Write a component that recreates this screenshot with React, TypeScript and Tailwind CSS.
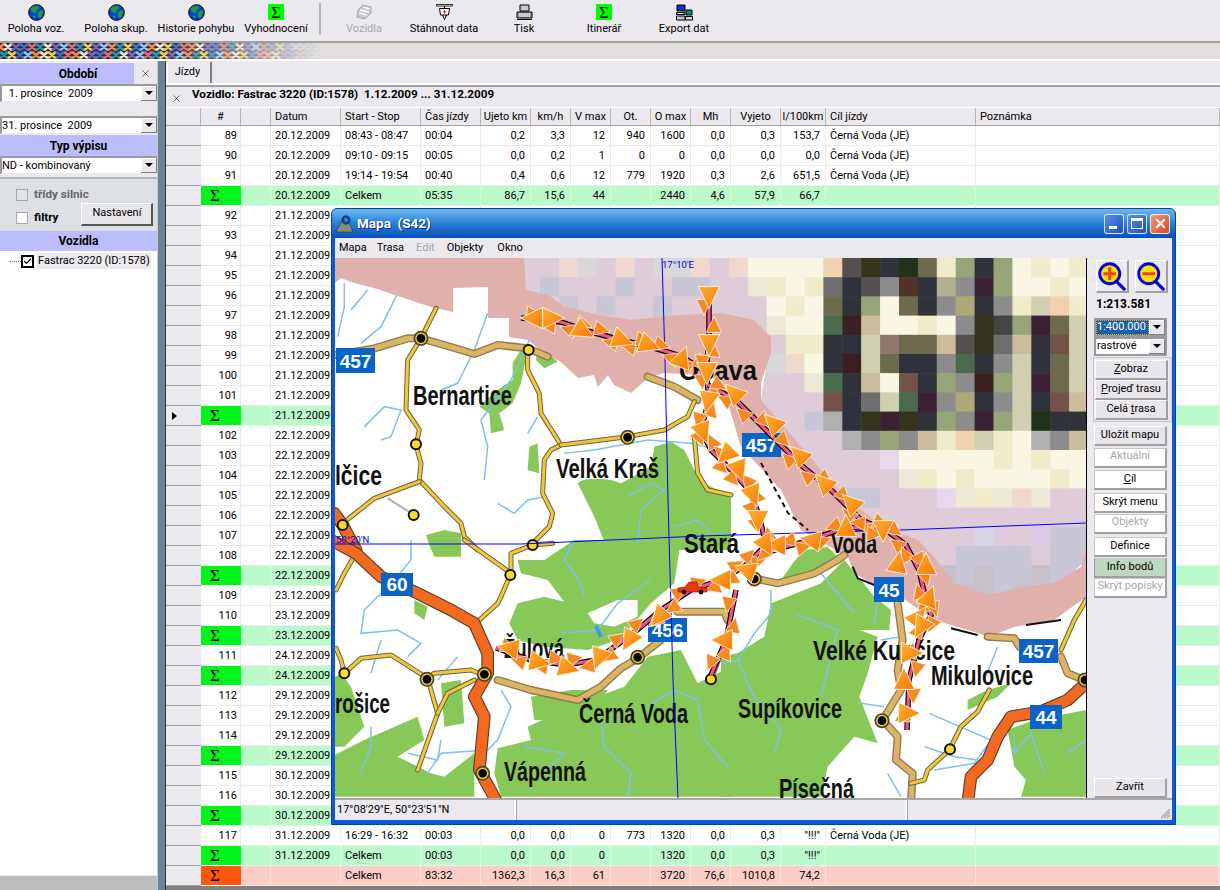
import { Check, X } from "lucide-react";

const gridCols =
  "grid grid-cols-[35px_40px_30px_70px_80px_60px_50px_40px_40px_40px_40px_40px_50px_45px_150px_1fr]";

const headers = ["", "#", "", "Datum", "Start - Stop", "Čas jízdy", "Ujeto km", "km/h", "V max", "Ot.", "O max", "Mh", "Vyjeto", "l/100km", "Cíl jízdy", "Poznámka"];
const leftCols = [3, 4, 5, 14, 15];

type Row = { kind: "row" | "sum" | "total"; no?: string; date: string; cells?: string[]; marker?: boolean };

function trip(no: number, date: string, cells?: string[]): Row {
  return { kind: "row", no: String(no), date, cells };
}
function sum(date: string, cells?: string[], marker?: boolean): Row {
  return { kind: "sum", date, cells, marker };
}

const rows: Row[] = [
  trip(89, "20.12.2009", ["08:43 - 08:47", "00:04", "0,2", "3,3", "12", "940", "1600", "0,0", "0,3", "153,7", "Černá Voda (JE)"]),
  trip(90, "20.12.2009", ["09:10 - 09:15", "00:05", "0,0", "0,2", "1", "0", "0", "0,0", "0,0", "0,0", "Černá Voda (JE)"]),
  trip(91, "20.12.2009", ["19:14 - 19:54", "00:40", "0,4", "0,6", "12", "779", "1920", "0,3", "2,6", "651,5", "Černá Voda (JE)"]),
  sum("20.12.2009", ["Celkem", "05:35", "86,7", "15,6", "44", "", "2440", "4,6", "57,9", "66,7", ""]),
  ...[92, 93, 94, 95, 96, 97, 98, 99, 100, 101].map((n) => trip(n, "21.12.2009")),
  sum("21.12.2009", undefined, true),
  ...[102, 103, 104, 105, 106, 107, 108].map((n) => trip(n, "22.12.2009")),
  sum("22.12.2009"),
  trip(109, "23.12.2009"),
  trip(110, "23.12.2009"),
  sum("23.12.2009"),
  trip(111, "24.12.2009"),
  sum("24.12.2009"),
  trip(112, "29.12.2009"),
  trip(113, "29.12.2009"),
  trip(114, "29.12.2009"),
  sum("29.12.2009"),
  trip(115, "30.12.2009"),
  trip(116, "30.12.2009"),
  sum("30.12.2009"),
  trip(117, "31.12.2009", ["16:29 - 16:32", "00:03", "0,0", "0,0", "0", "773", "1320", "0,0", "0,3", '"!!!"', "Černá Voda (JE)"]),
  sum("31.12.2009", ["Celkem", "00:03", "0,0", "0,0", "0", "", "1320", "0,0", "0,3", '"!!!"', ""]),
  { kind: "total", date: "", cells: ["Celkem", "83:32", "1362,3", "16,3", "61", "", "3720", "76,6", "1010,8", "74,2", ""] },
];

function Sigma({ className }: { className: string }) {
  return <span className={`font-['Liberation_Serif',serif] flex items-center text-[17px] leading-none text-black ${className}`}>Σ</span>;
}

function Globe() {
  return (
    <svg width="17" height="17" viewBox="0 0 17 17">
      <circle cx="8.5" cy="8.5" r="7.8" fill="#0b3fe6" stroke="#000" />
      <path d="M3 3 L9 1.5 L11.5 4 L8 7 L9 9.5 L6 9 L2.5 6 Z M10 8 L14.5 5.5 L15.5 9 L12 14.5 L10 12 Z M5 11 L7 12 L7 15 L5 13 Z" fill="#1f9a35" />
    </svg>
  );
}

function ToolIcon({ name }: { name: string }) {
  if (name === "globe") return <Globe />;
  if (name === "sigma") return <Sigma className="w-4 h-4 justify-center bg-[#00ff00]" />;
  if (name === "car")
    return (
      <svg width="18" height="17" viewBox="0 0 18 17">
        <path d="M3 6 L8 1 L16 3 L16 9 L10 15 L2 13 Z" fill="#c8c8c8" stroke="#a8a8a8" />
        <path d="M5 6 L14 8 M4 9 L12 11 M8 3 L15 5" stroke="#fff" strokeWidth="1.5" />
      </svg>
    );
  if (name === "down")
    return (
      <svg width="17" height="17" viewBox="0 0 17 17">
        <path d="M0.5 0.5 H16.5 V2 H0.5 Z" fill="#fff" stroke="#000" strokeWidth="0.8" />
        <path d="M8.5 2 V4 M3.5 4.5 H13.5 L12.5 11 H4.5 Z M6.5 11 L8.5 15.5 L10.5 11" fill="#fff" stroke="#000" />
        <path d="M8.5 6 V9.5 M6.8 7.8 H10.2" stroke="#e02020" />
      </svg>
    );
  if (name === "print")
    return (
      <svg width="17" height="17" viewBox="0 0 17 17">
        <path d="M4 1 H13 V7 H4 Z" fill="#c8c8d0" stroke="#000" />
        <path d="M1 8 H16 V14 H1 Z" fill="#9a9aa2" stroke="#000" />
        <path d="M3 10 H14 M3 12 H14" stroke="#fff" />
        <path d="M1 15.5 H16" stroke="#000" />
      </svg>
    );
  return (
    <svg width="17" height="17" viewBox="0 0 17 17">
      <path d="M1 1 H9 V7 H1 Z" fill="#1030d0" stroke="#000" />
      <path d="M0.5 8.5 H9 V10.5 H0.5 Z M0.5 12 H9 V16 H0.5 Z" fill="#c8c8c8" stroke="#000" />
      <path d="M10 6 H16 V11 H10 Z" fill="#0f8a8a" stroke="#000" />
      <path d="M9.5 12.5 H16.5 V16 H9.5 Z" fill="#d8d8d8" stroke="#000" />
    </svg>
  );
}

function ToolButton({ icon, label, disabled }: { icon: string; label: string; disabled?: boolean }) {
  return (
    <div className={`w-20 shrink-0 flex flex-col items-center pt-[3px] ${disabled ? "text-[#a8a8a8]" : "text-black"}`}>
      <div className="h-[18px] flex items-center justify-center">
        <ToolIcon name={icon} />
      </div>
      <span className="mt-[1px] whitespace-nowrap leading-[14px]">{label}</span>
    </div>
  );
}

const puzzle = ["#f08a3c", "#f3cf3f", "#8fc5e8", "#2f8f9a", "#7d63a8", "#e46a5a", "#f3e6b0", "#3f6fb0"];

function Banner() {
  const shapes = [];
  for (let i = 0; i < 42; i++) {
    for (let j = 0; j < 2; j++) {
      const c = puzzle[(i * 5 + j * 3 + (i % 3)) % puzzle.length];
      const x = i * 8 + (j ? 4 : 0);
      const y = 4 + j * 8;
      shapes.push(<path key={`${i}-${j}`} d={`M${x - 3} ${y - 2.5} L${x + 3} ${y + 2.5} M${x + 3} ${y - 2.5} L${x - 3} ${y + 2.5}`} stroke={c} strokeWidth="2.8" strokeLinecap="round" />);
    }
  }
  return (
    <svg width="1220" height="16" viewBox="0 0 1220 16" className="block">
      <defs>
        <linearGradient id="fade" x1="0" x2="1" y1="0" y2="0">
          <stop offset="0" stopColor="#e3dfdf" stopOpacity="0" />
          <stop offset="0.5" stopColor="#e3dfdf" stopOpacity="0.05" />
          <stop offset="0.92" stopColor="#e3dfdf" stopOpacity="1" />
        </linearGradient>
      </defs>
      <rect width="1220" height="16" fill="#e3dfdf" />
      <rect width="345" height="16" fill="#1c2560" />
      {shapes}
      <rect width="350" height="16" fill="url(#fade)" />
    </svg>
  );
}

function Combo({ value, className = "" }: { value: string; className?: string }) {
  return (
    <div className={`h-[18px] w-[157px] flex bg-white border-t-2 border-l-2 border-[#9a9a9a] border-b border-b-[#ebe9ed] ${className}`}>
      <span className="flex-1 leading-[15px] whitespace-pre overflow-hidden">{value}</span>
      <ArrowBtn />
    </div>
  );
}

function ArrowBtn() {
  return (
    <span className="w-4 h-[15px] shrink-0 flex items-center justify-center bg-[#ebe9ed] border-r border-b border-[#808080] shadow-[inset_1px_1px_0_#fff]">
      <span className="border-x-[4px] border-x-transparent border-t-[4px] border-t-black" />
    </span>
  );
}

function Header({ title, className = "" }: { title: string; className?: string }) {
  return <div className={`flex items-center justify-center bg-[#bdbdfb] font-bold text-[12px] ${className}`}>{title}</div>;
}

function LeftPanel() {
  return (
    <aside className="w-[158px] shrink-0 flex flex-col bg-[#ebe9ed] border-r border-[#c8c8c8] pt-[2px]">
      <div className="h-[21px] flex">
        <div className="w-[134px] flex items-center justify-center pl-[22px] bg-[#bdbdfb] font-bold text-[12px]">Období</div>
        <div className="flex-1 flex items-center justify-center">
          <X size={11} strokeWidth={1.2} />
        </div>
      </div>
      <Combo value=" 1. prosince  2009" className="pl-[4px]" />
      <div className="h-[14px]" />
      <Combo value="31. prosince  2009" className="mb-[1px]" />
      <Header title="Typ výpisu" className="h-[21px]" />
      <Combo value="ND - kombinovaný" />
      <div className="h-[54px] mt-[3px] bg-[#dcdfe3] border-t-2 border-[#b8b8b8] flex flex-col">
        <div className="flex items-center h-[22px] mt-[5px] pl-[16px] gap-[6px] text-[#666] font-bold text-[11.7px]">
          <span className="w-3 h-3 bg-[#e3e3e3] border border-[#a8a8a8]" />
          třídy silnic
        </div>
        <div className="flex items-center h-[24px] pl-[16px] gap-[6px] font-bold text-[11.7px]">
          <span className="w-3 h-3 bg-white border border-[#a8a8a8]" />
          filtry
          <span className="ml-[17px] w-[72px] h-[23px] -translate-y-1 flex items-center justify-center font-normal text-[11px] bg-[#e8e6ea] border-t border-l border-white border-r-2 border-b-2 border-r-[#555] border-b-[#555]">Nastavení</span>
        </div>
      </div>
      <Header title="Vozidla" className="h-[20px]" />
      <div className="flex-1 bg-white pl-[9px] pt-[1px]">
        <div className="flex items-center h-[18px]">
          <span className="w-[12px] shrink-0 border-t border-dotted border-[#808080]" />
          <span className="w-[13px] h-[13px] shrink-0 border-2 border-black flex items-center justify-center">
            <Check size={11} strokeWidth={3.2} />
          </span>
          <span className="ml-[3px] px-[1px] bg-[#ebe9ed] whitespace-nowrap">Fastrac 3220 (ID:1578)</span>
        </div>
      </div>
      <div className="h-[15px] bg-[#bebebe] border-t border-[#eeeeee]" />
    </aside>
  );
}

function GridRow({ row }: { row: Row }) {
  const bg = row.kind === "row" ? "bg-white" : row.kind === "sum" ? "bg-[#bbfbcb]" : "bg-[#ffcdc8]";
  const line = row.kind === "row" ? "border-[#ebe9ed]" : row.kind === "sum" ? "border-[#d9fbe2]" : "border-[#fde3e0]";
  const cells = row.cells ?? [];
  return (
    <div className={`${gridCols} h-5 ${bg}`}>
      <div className="bg-[#ebe9ed] border-b border-[#a0a0a0] flex items-center pl-[6px]">
        {row.marker && <span className="border-y-[4px] border-y-transparent border-l-[5px] border-l-black" />}
      </div>
      {row.kind === "row" ? (
        <div className={`border-b border-r ${line} text-right pr-[3px] leading-[19px]`}>{row.no}</div>
      ) : (
        <Sigma className={`pl-[9px] border-b border-white ${row.kind === "sum" ? "bg-[#00f51c]" : "bg-[#ff560f]"}`} />
      )}
      <div className={`border-b border-r ${line}`} />
      <div className={`border-b border-r ${line} pl-[4px] leading-[19px] whitespace-nowrap overflow-hidden`}>{row.date}</div>
      {headers.slice(4).map((_, i) => {
        const left = leftCols.includes(i + 4);
        return (
          <div key={i} className={`border-b border-r ${line} leading-[19px] whitespace-nowrap overflow-hidden ${left ? "pl-[4px]" : "text-right pr-[5px]"}`}>
            {cells[i] ?? ""}
          </div>
        );
      })}
    </div>
  );
}

function DataGrid() {
  return (
    <div className="flex-1 flex flex-col min-w-0">
      <div className="h-[24px] bg-[#ebe9ed] flex items-end pl-[1px] border-b-2 border-white">
        <div className="w-[45px] h-[21px] flex items-center justify-center pr-[3px] border-l border-white border-r-2 border-r-[#808080]">Jízdy</div>
      </div>
      <div className="h-[22px] bg-[#ebe9ed] border-t-2 border-[#a0a0a0] flex items-center">
        <span className="w-[26px] pl-[5px] pt-[3px]">
          <X size={11} strokeWidth={1.2} />
        </span>
        <span className="font-bold text-[11.7px] whitespace-pre pb-[5px]">Vozidlo: Fastrac 3220 (ID:1578)  1.12.2009 ... 31.12.2009</span>
      </div>
      <div className={`${gridCols} h-[19px] bg-[#ebe9ed] border-t border-white border-b border-b-[#a0a0a0]`}>
        {headers.map((h, i) => (
          <div key={i} className={`leading-[17px] whitespace-nowrap overflow-hidden border-r border-[#b8b8b8] ${leftCols.includes(i) ? "pl-[4px]" : "text-center"}`}>
            {h}
          </div>
        ))}
      </div>
      <div className="flex-1 overflow-hidden bg-white">
        {rows.map((r, i) => (
          <GridRow key={i} row={r} />
        ))}
      </div>
      <div className="h-[4px] bg-[#808080]" />
    </div>
  );
}

const palette: Record<string, string> = {
  c: "#f9f7e4", e: "#f0ecca", o: "#f0d2b0", d: "#2f323a", k: "#54504f", m: "#34331c", g: "#223218", v: "#6e6a4c",
  s: "#96a578", n: "#8c8c8c", y: "#6e6e6e", b: "#4e3428", p: "#3a2234", r: "#3a2020", f: "#4c6a50", t: "#cbbd9b",
  l: "#d0d0b0", u: "#72524a", h: "#ada877", a: "#b0b0b0", i: "#deccd8", j: "#c9c6d6", w: "#ece9d8", q: "#eed8d0",
  z: "#e8d8ec", x: "#917670", A: "#b0b090", B: "#d8d8d8", C: "#444444", D: "#c6c0c8", E: "#d5d5e5", G: "#dcc8e8",
};

const mosaic = [
  "iiqBiqiBBqi" + "qccccokmdgvesdscece",
  "ijiiijiijji" + "iweceydknbdAnpsccec",
  "iijijiijiii" + "iicecvdscvdnhdneloe",
  "iiiiiiijjii" + "iiwccfrtccecnmCspvl",
  "iiiiiiiiiii" + "iiieeddlxvvtkmytdul",
  "iiiiiiiiiii" + "iiBqcdrlvddnfdnldvl",
  "iiiiiiiiiii" + "iiiiwfdtcudsnrslpvl",
  "iiiiiiiiiii" + "iiiiiudylfpnhdnldut",
  "iiiiiiiiiii" + "iiiijadmpmdsnpslgdd",
  "iiiiiiiiiii" + "iiiiiiansnteolecant",
  "iiiiiiiiiii" + "iiiiiiiizcccccececc",
  "iiiiiiiiiii" + "iiiiiiiiiwececcccec",
  "iiiiiiiiiii" + "iiiiijjjiiizwewqwii",
  "iiiiiiiiiii" + "iiiiiiiiiiiiiiiiiii",
  "iiiiiiiiiii" + "iiiiiiiiiiiiiEiiGjj",
  "iiiiiiiiiii" + "iiiiiiiijjiijjjjijj",
  "iiiiiiiiiii" + "iiiiiiijjiiDjDjjDjj",
  "iiiiiiiiiii" + "iiiiiiiiiDjjDDjDjjD",
];

const big: [number, number, number][] = [
  [532, 318, 180], [551, 318, 0], [582, 331, 30], [621, 340, 20], [648, 345, 20], [681, 358, -70],
  [708, 296, 90], [708, 344, 90], [706, 372, 90], [707, 401, 100], [702, 432, 70], [725, 455, 135],
  [733, 393, 225], [772, 423, 225], [798, 455, 225], [823, 483, 225], [850, 503, 225], [882, 530, 90],
  [810, 540, 190], [845, 527, -90], [775, 545, 180], [738, 470, 70], [752, 495, 70], [757, 520, 90], [765, 545, 60],
  [720, 580, 180], [745, 570, 200], [658, 617, 130], [628, 640, 120], [598, 658, 110], [567, 668, 15], [538, 662, 10], [508, 648, 190],
  [897, 563, -80], [925, 565, -90], [928, 597, -70], [917, 617, -50], [920, 627, 120], [910, 653, 0], [903, 680, -90], [907, 713, 0], [722, 640, 180],
];

const routes = [
  "520,318 560,322 590,332 620,340 650,347 680,356 705,372",
  "708,292 708,340 705,372 708,400 700,430 710,450 730,470 748,490 758,515 765,545",
  "707,385 735,400 770,435 800,465 830,490 860,520 885,530 905,545 918,570 925,600 930,615 918,640 908,680 906,730",
  "745,560 780,548 810,540 845,527 885,530",
  "765,545 745,565 720,580 690,590 660,610 630,635 595,660 565,665 530,660 495,648",
  "735,590 725,640 710,675",
];

function tri(x: number, y: number, angle: number, s: number) {
  const a = (angle * Math.PI) / 180;
  const pt = (dx: number, dy: number) => `${(x + dx * Math.cos(a) - dy * Math.sin(a)).toFixed(1)},${(y + dx * Math.sin(a) + dy * Math.cos(a)).toFixed(1)}`;
  return `${pt(s, 0)} ${pt(-s * 0.75, s * 0.85)} ${pt(-s * 0.75, -s * 0.85)}`;
}

function smallArrows() {
  const out: [number, number, number][] = [];
  routes.forEach((r, ri) => {
    const pts = r.split(" ").map((p) => p.split(",").map(Number));
    for (let i = 0; i < pts.length - 1; i++) {
      const [x1, y1] = pts[i];
      const [x2, y2] = pts[i + 1];
      const len = Math.hypot(x2 - x1, y2 - y1);
      const ang = (Math.atan2(y2 - y1, x2 - x1) * 180) / Math.PI;
      [0.3, 0.7].forEach((f, k) => {
        const side = (i + ri + k) % 2 ? 5 : -5;
        out.push([x1 + (x2 - x1) * f - ((y2 - y1) / len) * side, y1 + (y2 - y1) * f + ((x2 - x1) / len) * side, ang + ((i + k) % 2 ? 180 : 0)]);
      });
    }
  });
  return out;
}

const ROAD_Y = "#efc93a";
const ROAD_T = "#dcb464";

function Road({ d, kind }: { d: string; kind: "y" | "t" | "o" }) {
  const o = kind === "y" ? 15 : kind === "t" ? 24 : 38;
  const i = kind === "y" ? 9 : kind === "t" ? 16 : 31;
  const c = kind === "y" ? ROAD_Y : kind === "t" ? ROAD_T : "#f26a20";
  const e = kind === "y" ? "#6b6248" : kind === "t" ? "#8d7a52" : "#5f3f2a";
  return (
    <>
      <path d={d} fill="none" stroke={e} strokeWidth={o} strokeLinejoin="round" strokeLinecap="round" />
      <path d={d} fill="none" stroke={c} strokeWidth={i} strokeLinejoin="round" strokeLinecap="round" />
    </>
  );
}

function Dot({ x, y, black }: { x: number; y: number; black?: boolean }) {
  return black ? (
    <>
      <circle cx={x} cy={y} r="20" fill="#f3cc2e" stroke="#4a4530" strokeWidth="5" />
      <circle cx={x} cy={y} r="13" fill="#000" />
    </>
  ) : (
    <circle cx={x} cy={y} r="15" fill="#ffd92a" stroke="#111" strokeWidth="6" />
  );
}

function Label({ x, y, w, t }: { x: number; y: number; w: number; t: string }) {
  return (
    <text x={x} y={y} fontFamily="'Liberation Sans', sans-serif" fontWeight="700" fontSize="27" textLength={w} lengthAdjust="spacingAndGlyphs" fill="#111">
      {t}
    </text>
  );
}

function Badge({ x, y, w, h, t }: { x: number; y: number; w: number; h: number; t: string }) {
  return (
    <>
      <rect x={x} y={y} width={w} height={h} fill="#0a64c8" />
      <text x={x + w / 2} y={y + h - 5} textAnchor="middle" fontFamily="'Liberation Sans', sans-serif" fontWeight="700" fontSize="19" fill="#fff">
        {t}
      </text>
    </>
  );
}

const green = "#88c858";
const blue = "#80c0ea";

function MapView() {
  return (
    <svg width="751" height="540" viewBox="334 258 751 540" className="block shrink-0 bg-white">
      <defs>
        <clipPath id="mosaicClip">
          <polygon points="523,258 1085,258 1085,560 1053,590 987,600 953,590 917,545 883,530 800,480 760,400 770,340 720,320 600,320 523,290" />
        </clipPath>
        <linearGradient id="arrow" x1="0" x2="1" y1="0" y2="1">
          <stop offset="0" stopColor="#ffb030" />
          <stop offset="1" stopColor="#f57a08" />
        </linearGradient>
      </defs>

      {/* forest */}
      <g transform="translate(330,250) scale(0.3333)" fill={green}>
        <path d="M740 700 Q760 680 840 690 L870 700 L960 650 L970 590 L1020 575 L1060 600 L1090 660 L1120 700 L1200 740 L1200 900 L830 900 L790 800 Z" />
        <path d="M445 470 L500 420 L545 390 L545 340 L575 290 L590 300 L570 400 L545 460 L505 490 L520 540 L480 550 L475 490 Z" />
        <path d="M595 590 L620 580 L625 670 L590 660 Z" />
        <path d="M285 855 L340 840 L390 850 L390 900 L300 900 Z" />
        <path d="M620 290 L650 310 L680 335 L640 355 L615 330 Z" />
      </g>
      <g transform="translate(330,540) scale(0.3333)" fill={green}>
        <path d="M730 0 L1050 0 L1030 130 L960 190 L900 260 L860 300 L770 330 L640 320 L560 300 L535 250 L560 190 L640 170 L700 185 L650 120 L570 100 L560 60 L640 60 Z" />
        <path d="M770 220 L860 180 L920 180 L920 230 L850 260 L790 250 Z" fill="#fff" />
        <path d="M500 625 L600 600 L590 560 L720 500 L880 440 L950 350 L1050 330 L1100 430 L1200 380 L1200 770 L510 770 L490 700 Z" />
        <path d="M600 470 L720 450 L830 450 L800 500 L720 540 L610 540 Z" />
        <path d="M0 420 L30 400 L60 440 L100 560 L40 620 L0 620 Z" />
        <path d="M250 180 L290 200 L280 240 L250 220 Z" />
        <path d="M330 430 L390 420 L400 550 L340 560 Z" />
        <path d="M0 770 L0 650 L100 600 L260 530 L280 600 L200 650 L300 700 L340 710 L430 640 L430 770 Z" />
        <path d="M290 0 L390 0 L390 50 L310 50 Z" />
      </g>
      <g transform="translate(720,540) scale(0.3333)" fill={green}>
        <path d="M150 190 L300 130 L370 60 L420 120 L460 170 L510 210 L505 270 L415 270 L470 290 L440 400 L415 470 L470 610 L400 590 L320 680 L300 770 L0 770 L0 350 L50 340 L130 290 Z" />
        <path d="M215 70 L250 30 L320 20 L350 50 L300 100 L180 120 Z" />
        <path d="M860 570 L940 540 L1095 510 L1095 770 L900 770 L915 720 L880 680 Z" />
        <path d="M740 480 L800 450 L870 430 L830 470 L740 510 Z" />
      </g>

      {/* rivers */}
      <g transform="translate(330,250) scale(0.3333)" fill="none" stroke={blue} strokeWidth="4.5">
        <path d="M40 100 L40 170 L20 260 M200 130 L150 230 L90 280 M110 120 L60 180" />
        <path d="M470 190 L430 300 L380 400 L330 420 M600 260 L540 390 L450 510 L470 590 L460 690" />
        <path d="M100 530 L160 470 L210 480 L180 560 L150 570 M620 500 L590 550 M500 760 L550 790 L590 750 L640 740" />
        <path d="M1200 610 L1080 580 L950 570 L790 600 L700 610 M890 740 L960 700 L1000 720 L930 780 L920 880 M1030 830 L1100 810 L1140 850" />
      </g>
      <g transform="translate(330,540) scale(0.3333)" fill="none" stroke={blue} strokeWidth="4.5">
        <path d="M240 0 L240 60 L190 120 L100 210 L90 280 L200 270 L270 310 L230 350 M150 300 L120 400 M380 350 L320 420" />
        <path d="M730 0 L700 60 L750 130 L760 170 M960 120 L860 190 L800 270 L690 280 M510 450 L540 500 L500 600 L470 630 L330 640 L290 700" />
        <path d="M120 560 L120 620 L90 700 M330 600 L320 660 L230 640 M580 620 L700 640 L640 700 M810 540 L820 620 L900 700 L890 770 M950 500 L1030 450 L1100 480 L1120 600 L1190 680" />
      </g>
      <g transform="translate(720,540) scale(0.3333)" fill="none" stroke={blue} strokeWidth="4.5">
        <path d="M150 150 L150 220 L100 280 L50 360 L100 470 L180 570 L160 640 M300 100 L400 220 M220 220 L350 270 L300 470 M60 360 L0 370" />
        <path d="M420 490 L490 500 M625 520 L810 600 L760 670 L640 690 M610 620 L700 650 L770 660 M830 320 L790 420 M1040 640 L1095 600 M880 580 L880 640 L930 580 L970 700 M500 700 L540 770" />
        <path d="M470 180 L460 250 M480 300 L540 290" />
      </g>
      <path d="M595 626 L600 637" stroke="#3aa0ee" strokeWidth="4" />

      {/* mosaic */}
      <g clipPath="url(#mosaicClip)">
        <rect x="520" y="258" width="570" height="350" fill="#deccd8" />
        {mosaic.map((line, r) =>
          line.split("").map((ch, c) => <rect key={`${r}-${c}`} x={520 + c * 18.9} y={258 + r * 19.2} width="19.4" height="19.7" fill={palette[ch]} />),
        )}
      </g>

      {/* border strip */}
      <polygon
        fill="#e0b0ac"
        points="334,258 523,258 525,290 547,295 563,306 597,315 630,320 680,315 720,313 753,320 770,337 770,353 760,383 760,400 797,443 843,497 883,527 917,540 933,557 953,583 987,595 1020,587 1053,583 1080,567 1085,550 1085,597 1053,620 1013,627 987,637 977,633 933,620 900,597 870,583 853,573 847,557 800,530 780,490 740,447 720,380 700,375 663,373 647,378 630,393 613,385 607,375 597,387 593,375 577,378 560,362 543,353 527,340 508,337 508,318 487,318 487,287 452,288 452,312 430,307 373,288 353,283 340,278 334,283"
      />

      {/* roads */}
      <g transform="translate(330,250) scale(0.3333)">
        <Road kind="t" d="M15 315 L130 295 L230 265 L270 265 L340 285 L430 312 L500 285 L590 295 L650 320" />
        <Road kind="t" d="M950 380 L1030 410 L1100 450" />
        <Road kind="y" d="M315 175 L270 265 L230 330 L225 480 L265 540 L255 585 L270 640 L265 690 L340 770 L390 820 L400 860 L440 900" />
        <Road kind="y" d="M590 300 L590 360 L625 430 L630 490 L690 585 L660 600 L640 630 L635 730 L665 790 L655 830 L605 880" />
        <Road kind="y" d="M690 585 L890 560 L1000 540 L1070 500 L1090 455" />
        <Road kind="y" d="M265 695 L130 745 L35 820" />
        <Road kind="y" d="M1090 560 L1100 670 L1130 720 L1200 735" />
        <path d="M170 745 L250 795" stroke="#b0b0b0" strokeWidth="6" />
        <Road kind="o" d="M10 790 L35 825 L75 900" />
      </g>
      <g transform="translate(330,540) scale(0.3333)">
        <Road kind="y" d="M400 0 L540 100 L510 170 L500 190 L440 245" />
        <Road kind="y" d="M540 100 L540 40 L605 15 L665 10" />
        <Road kind="y" d="M75 40 L40 100 L15 150" />
        <Road kind="y" d="M15 325 L30 360 L40 400 L90 355 L180 345 L290 415 L310 400 L420 390 L460 405" />
        <Road kind="y" d="M290 415 L320 520 L260 690" />
        <Road kind="y" d="M320 520 L350 460 L430 420" />
        <Road kind="y" d="M1140 420 L1170 340 L1190 300" />
        <Road kind="t" d="M500 420 L600 450 L740 480 L810 440 L870 385 L920 355 L990 300" />
        <Road kind="t" d="M1040 215 L1180 215 L1190 240" />
        <Road kind="o" d="M0 0 L75 40 L150 110 L260 160 L360 210 L430 250 L470 340 L470 400 L430 470 L460 530 L445 690 L500 790" />
      </g>
      <g transform="translate(720,540) scale(0.3333)">
        <Road kind="t" d="M100 115 L170 130 L280 100 L350 60 L370 45" />
        <Road kind="t" d="M530 190 L545 300 L530 390 L540 450 L485 540 L530 590 L525 660 L575 700 L570 790" />
        <Road kind="t" d="M800 290 L880 295 L895 320" />
        <Road kind="t" d="M1020 350 L1040 400 L1090 420" />
        <Road kind="y" d="M1020 330 L1060 240 L1095 180" />
        <Road kind="y" d="M805 450 L770 515 L720 560 L685 630 L620 690 L610 720 L570 730" />
        <Road kind="o" d="M1095 430 L1040 480 L960 515 L870 530 L830 590 L800 660 L750 710 L740 790" />
        <path d="M395 80 L410 115 L460 135 M690 265 L770 285 M915 255 L1020 240" fill="none" stroke="#111" strokeWidth="6" />
      </g>
      <path d="M760 463 L787 513 L807 530" fill="none" stroke="#111" strokeWidth="2" strokeDasharray="5 4" />

      {/* towns */}
      <g transform="translate(330,250) scale(0.3333)">
        <Dot x={270} y={265} black />
        <Dot x={890} y={562} black />
        <Dot x={593} y={300} />
        <Dot x={255} y={583} />
        <Dot x={248} y={795} />
        <Dot x={35} y={825} />
        <Dot x={605} y={885} />
      </g>
      <g transform="translate(330,540) scale(0.3333)">
        <Dot x={538} y={105} />
        <Dot x={40} y={400} />
        <Dot x={1140} y={418} />
        <Dot x={288} y={418} black />
        <Dot x={460} y={403} black />
        <Dot x={920} y={352} black />
        <Dot x={455} y={700} black />
      </g>
      <g transform="translate(720,540) scale(0.3333)">
        <Dot x={100} y={117} black />
        <Dot x={483} y={542} black />
        <Dot x={687} y={628} />
        <Dot x={1092} y={420} black />
      </g>

      {/* names */}
      <Label x={412} y={405} w={99} t="Bernartice" />
      <Label x={555} y={478} w={103} t="Velká Kraš" />
      <Label x={334} y={485} w={47} t="lčice" />
      <Label x={683} y={553} w={55} t="Stará" />
      <Label x={830} y={553} w={46} t="Voda" />
      <Label x={678} y={380} w={78} t="Opava" />
      <Label x={812} y={660} w={142} t="Velké Kunčice" />
      <Label x={930} y={685} w={102} t="Mikulovice" />
      <Label x={737} y={718} w={104} t="Supíkovice" />
      <Label x={778} y={798} w={75} t="Písečná" />
      <Label x={578} y={723} w={109} t="Černá Voda" />
      <Label x={503} y={781} w={82} t="Vápenná" />
      <Label x={334} y={713} w={55} t="rošice" />
      <Label x={503} y={658} w={60} t="Žulová" />

      {/* road numbers */}
      <Badge x={335} y={348} w={39} h={25} t="457" />
      <Badge x={380} y={573} w={32} h={23} t="60" />
      <Badge x={647} y={618} w={39} h={24} t="456" />
      <Badge x={741} y={433} w={39} h={24} t="457" />
      <Badge x={873} y={577} w={30} h={25} t="45" />
      <Badge x={1018} y={639} w={39} h={24} t="457" />
      <Badge x={1029} y={705} w={32} h={24} t="44" />

      {/* grid lines */}
      <path d="M661 258 L664 360 L667 500 L672 680 L677 798" fill="none" stroke="#0000ff" />
      <path d="M334 544 L520 544 L700 536 L900 530 L1085 523" fill="none" stroke="#0000ff" />
      <text x="661" y="268" fontFamily="'Roboto', sans-serif" fontSize="9.5" fill="#0000e0">17°10'E</text>
      <text x="335" y="543" fontFamily="'Roboto', sans-serif" fontSize="9.5" fill="#0000e0">50°20'N</text>

      {/* route */}
      {routes.map((r, i) => (
        <g key={i} fill="none">
          <polyline points={r} stroke="#000" strokeWidth="5.5" />
          <polyline points={r} stroke="#f4547e" strokeWidth="3.2" />
        </g>
      ))}
      {smallArrows().map(([x, y, a], i) => (
        <polygon key={i} points={tri(x, y, a, 9)} fill="#f58a20" stroke="#fff" strokeWidth="0.7" />
      ))}
      {big.map(([x, y, a], i) => (
        <polygon key={i} points={tri(x, y, a, 12.5)} fill="url(#arrow)" stroke="#fff" strokeWidth="0.8" />
      ))}

      {/* vehicle */}
      <path d="M677 588 L684 587 L688 582 L696 582 L697 587 L706 588 L706 592 L677 592 Z" fill="#e8380a" stroke="#7a1a00" strokeWidth="0.6" />
      <circle cx="683" cy="592" r="2.4" fill="#111" />
      <circle cx="700" cy="592" r="2.4" fill="#111" />
    </svg>
  );
}

function ZoomBtn({ minus }: { minus?: boolean }) {
  return (
    <div className="w-[33px] h-[33px] bg-[#ebe9ed] border-r-2 border-b-2 border-[#a0a0a0] border-t border-l border-t-white border-l-white">
      <svg width="30" height="30" viewBox="0 0 33 33">
        <path d="M20 21 L31 32" stroke="#0000e0" strokeWidth="3.5" />
        <circle cx="14" cy="14" r="11" fill="#ffe000" stroke="#0000e0" strokeWidth="3.2" />
        <path d={minus ? "M7 14 H21" : "M7 14 H21 M14 7 V21"} stroke="#f04000" strokeWidth="3.2" />
      </svg>
    </div>
  );
}

type BtnTone = "gray" | "white" | "off" | "green";

function SideBtn({ tone = "gray", children, className = "" }: { tone?: BtnTone; children: React.ReactNode; className?: string }) {
  const tones: Record<BtnTone, string> = {
    gray: "bg-[#e8e6ea] text-black border-t-white border-l-white",
    white: "bg-white text-black border-t-[#c8c8c8] border-l-[#c8c8c8]",
    off: "bg-white text-[#a8a8a8] border-t-[#c8c8c8] border-l-[#c8c8c8] pb-[2px]",
    green: "bg-[#bcd8c0] text-black border-t-[#c8c8c8] border-l-[#9a9a9a]",
  };
  return <div className={`w-[73px] h-[20px] flex items-center justify-center whitespace-nowrap border-t border-l border-r-2 border-b-2 border-r-[#a0a0a0] border-b-[#a0a0a0] ${tones[tone]} ${className}`}>{children}</div>;
}

function SidePanel() {
  return (
    <div className="flex-1 flex flex-col bg-[#ebe9ed] pl-[7px] relative">
      <div className="flex gap-[6px] pl-[2px] pt-[2px]">
        <ZoomBtn />
        <ZoomBtn minus />
      </div>
      <div className="font-bold text-[12px] pl-[2px] h-[19px] leading-[19px] mt-[2px]">1:213.581</div>
      <div className="mt-[4px] w-[73px] h-[19px] flex bg-[#1b5fa8] border-2 border-[#9a9a9a] text-white">
        <span className="flex-1 leading-[14px] outline-dotted outline-1 outline-[#ffb000] -outline-offset-1 pl-[1px] whitespace-nowrap overflow-hidden">1:400.000</span>
        <ArrowBtn />
      </div>
      <div className="w-[73px] h-[19px] flex bg-white border-2 border-[#9a9a9a]">
        <span className="flex-1 leading-[14px] pl-[1px]">rastrové</span>
        <ArrowBtn />
      </div>
      <div className="w-[79px] -ml-[1px] h-[65px] mt-[1px] border border-[#c8c8c8] pl-[1px] pt-[2px] flex flex-col gap-0">
        <SideBtn><span><u>Z</u>obraz</span></SideBtn>
        <SideBtn className="h-[19px]"><span><u>P</u>rojeď trasu</span></SideBtn>
        <SideBtn className="h-[20px]"><span>Celá <u>t</u>rasa</span></SideBtn>
      </div>
      <div className="flex flex-col mt-[4px] gap-[2px]">
        <SideBtn>Uložit mapu</SideBtn>
        <SideBtn tone="off">Aktuální</SideBtn>
        <SideBtn tone="white"><span><u>C</u>íl</span></SideBtn>
        <SideBtn tone="white" className="mt-[1px]">Skrýt menu</SideBtn>
        <SideBtn tone="off" className="-mt-[1px]">Objekty</SideBtn>
        <SideBtn tone="white" className="mt-[1px]">Definice</SideBtn>
        <SideBtn tone="green" className="-mt-[1px]">Info bodů</SideBtn>
        <SideBtn tone="off" className="-mt-[2px]">Skrýt popisky</SideBtn>
      </div>
      <SideBtn className="mt-auto h-[17px] border-b-0 border-t-[#c8c8c8]">Zavřít</SideBtn>
    </div>
  );
}

function CaptionBtn({ close, children }: { close?: boolean; children: React.ReactNode }) {
  return (
    <div className={`w-[20px] h-[20px] rounded-[3px] border border-white/80 flex items-center justify-center ${close ? "bg-gradient-to-br from-[#ee9a7c] to-[#d2481f]" : "bg-gradient-to-br from-[#5d8fe6] to-[#1a4fc4]"}`}>
      {children}
    </div>
  );
}

function MapWindow() {
  return (
    <div className="absolute left-[331px] top-[208px] w-[845px] h-[617px] flex flex-col rounded-t-[6px] bg-[#0e5ad0] px-[3px] pb-[4px] border border-[#0a3fa8] border-t-[#0a3fa8]">
      <div className="h-[29px] -mx-[3px] rounded-t-[5px] bg-gradient-to-b from-[#6ab8ee] via-[#2a80d8] to-[#0a4fb8] flex items-center pl-[3px] pr-[5px] shrink-0">
        <svg width="19" height="18" viewBox="0 0 19 18">
          <path d="M1 17 L8 4 L12 9 L14 7 L18 17 Z" fill="#8a8a7a" stroke="#333" strokeWidth="0.6" />
          <circle cx="11" cy="5" r="4.2" fill="#1040c8" stroke="#0a1f60" strokeWidth="0.6" />
          <path d="M9 3 L12 3 L13 6 L10 7 Z" fill="#2fa040" />
        </svg>
        <span className="ml-[3px] font-bold text-white text-[13.5px] whitespace-pre [text-shadow:1px_1px_0_#0a3080]">Mapa  (S42)</span>
        <div className="ml-auto flex gap-[3px]">
          <CaptionBtn><span className="w-[8px] h-[3px] bg-white mt-[8px] -ml-[2px]" /></CaptionBtn>
          <CaptionBtn><span className="w-[12px] h-[11px] border border-white border-t-[3px]" /></CaptionBtn>
          <CaptionBtn close><X size={15} color="#fff" strokeWidth={3} /></CaptionBtn>
        </div>
      </div>
      <div className="h-[20px] shrink-0 bg-[#ebe9ed] flex items-center pl-[4px] gap-[12px]">
        <span>Mapa</span>
        <span className="-ml-[2px]">Trasa</span>
        <span className="text-[#a8a8a8]">Edit</span>
        <span>Objekty</span>
        <span className="ml-[2px]">Okno</span>
      </div>
      <div className="flex h-[540px] shrink-0">
        <MapView />
        <div className="w-px bg-black shrink-0" />
        <SidePanel />
      </div>
      <div className="flex-1 bg-[#ebe9ed] flex border-t-2 border-[#a8a8a8]">
        <div className="w-[181px] pl-[2px] leading-[19px] whitespace-nowrap border-r-2 border-white">17°08'29"E, 50°23'51"N</div>
        <div className="w-[391px] border-l border-[#a8a8a8] border-r-2 border-r-white" />
        <div className="flex-1 border-l border-[#a8a8a8] relative">
          <svg width="12" height="12" viewBox="0 0 12 12" className="absolute right-[1px] bottom-[1px]">
            <path d="M11 2 L2 11 M11 5 L5 11 M11 8 L8 11" stroke="#a0a0a0" strokeWidth="1.2" />
          </svg>
        </div>
      </div>
    </div>
  );
}

export default function App() {
  return (
    <div className="relative w-[1220px] h-[890px] overflow-hidden bg-[#ebe9ed] text-black text-[11px] font-['Roboto','Liberation_Sans',sans-serif] flex flex-col">
      <div className="h-[43px] shrink-0 flex -ml-1 border-b-2 border-[#a0a0a0]">
        <ToolButton icon="globe" label="Poloha voz." />
        <ToolButton icon="globe" label="Poloha skup." />
        <ToolButton icon="globe" label="Historie pohybu" />
        <ToolButton icon="sigma" label="Vyhodnocení" />
        <div className="shrink-0 w-[2px] h-[32px] mt-[3px] mx-[3px] bg-[#b8b8b8]" />
        <ToolButton icon="car" label="Vozidla" disabled />
        <ToolButton icon="down" label="Stáhnout data" />
        <ToolButton icon="print" label="Tisk" />
        <ToolButton icon="sigma" label="Itinerář" />
        <ToolButton icon="export" label="Export dat" />
      </div>
      <div className="h-[16px] shrink-0">
        <Banner />
      </div>
      <div className="h-[2px] shrink-0 bg-white" />
      <div className="flex-1 flex min-h-0">
        <LeftPanel />
        <div className="w-[8px] shrink-0 bg-[#6e8291] border-r border-[#2a3a44]" />
        <DataGrid />
      </div>
      <MapWindow />
    </div>
  );
}
